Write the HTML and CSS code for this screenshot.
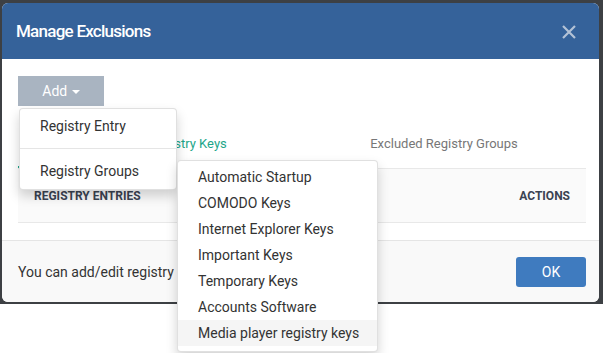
FILE: index.html
```html
<!DOCTYPE html>
<html lang="en">
<head>
    <meta charset="UTF-8">
    <meta name="viewport" content="width=device-width, initial-scale=1.0">
    <link rel="stylesheet" href="styles.css">
</head>
<body>
    <div class="backdrop">
        <div class="modal">
            <div class="modal-header">
                <h1>Manage Exclusions</h1>
                <svg class="close" width="16" height="16" viewBox="0 0 16 16">
                    <path d="M2 2 L14 14 M14 2 L2 14" stroke="#b3c2d6" stroke-width="2.2" fill="none"/>
                </svg>
            </div>
            <div class="modal-body">
                <button class="btn-add">Add <span class="caret"></span></button>
                <div class="tabs">
                    <div class="tab active">Excluded Registry Keys</div>
                    <div class="tab">Excluded Registry Groups</div>
                </div>
                <div class="table-head">
                    <span>Registry Entries</span>
                    <span>Actions</span>
                </div>

                <!-- add menu -->
                <ul class="dropdown add-menu">
                    <li>Registry Entry</li>
                    <li class="divider"></li>
                    <li>Registry Groups</li>
                </ul>

                <!-- registry groups submenu -->
                <ul class="dropdown groups-menu">
                    <li>Automatic Startup</li>
                    <li>COMODO Keys</li>
                    <li>Internet Explorer Keys</li>
                    <li>Important Keys</li>
                    <li>Temporary Keys</li>
                    <li>Accounts Software</li>
                    <li class="hover">Media player registry keys</li>
                </ul>
            </div>
            <div class="modal-footer">
                <p>You can add/edit registry</p>
                <button class="btn-ok">OK</button>
            </div>
        </div>
    </div>
</body>
</html>
```

FILE: styles.css
```css
html, body {
    height: 100%;
}
body {
    margin: 0;
    background: #fff;
    font-family: Roboto, "Liberation Sans", sans-serif;
    color: #333;
}
.backdrop {
    background-color: #3d4044;
    height: 304px;
    padding: 3px 4px 0 2px;
    box-sizing: border-box;
}
.modal {
    background: #fff;
    border-radius: 6px;
    height: 299px;
    display: flex;
    flex-direction: column;
}
.modal-header {
    background-color: #35629a;
    height: 56px;
    border-radius: 6px 6px 0 0;
    padding: 0 22px 0 14px;
    display: flex;
    align-items: center;
    justify-content: space-between;
}
h1 {
    margin: 0;
    color: #fff;
    font-size: 17px;
    font-weight: 500;
    letter-spacing: -0.75px;
}
.close {
    display: block;
    margin-top: 1px;
}
.modal-body {
    position: relative;
    height: 181px;
    box-sizing: border-box;
    padding: 17px 13px 17px 16px;
}
.btn-add {
    width: 86px;
    height: 30px;
    border: none;
    background-color: #a9b4c1;
    color: #fff;
    font-family: inherit;
    font-size: 14px;
    padding: 0;
    display: block;
}
.caret {
    display: inline-block;
    width: 0;
    height: 0;
    border-top: 4px solid #fff;
    border-left: 4px solid transparent;
    border-right: 4px solid transparent;
    vertical-align: middle;
    margin-left: 1px;
}
.tabs {
    display: flex;
    margin-top: 18px;
}
.tab {
    flex: 1;
    text-align: center;
    font-size: 13px;
    line-height: 20px;
    padding: 10px 0 12px;
    color: #777;
    border-bottom: 2px solid transparent;
}
.tab.active {
    color: #1ea68a;
    border-bottom-color: #1ea68a;
}
.table-head {
    height: 53px;
    border-top: 1px solid #e8e8e8;
    border-bottom: 1px solid #e8e8e8;
    background: #fafafa;
    display: flex;
    align-items: center;
    justify-content: space-between;
    padding: 0 16px;
    font-size: 12px;
    font-weight: 700;
    text-transform: uppercase;
    color: #3a4352;
}
.dropdown {
    position: absolute;
    margin: 0;
    list-style: none;
    background: #fff;
    border: 1px solid rgba(0, 0, 0, 0.12);
    border-radius: 4px;
    box-shadow: 0 6px 12px rgba(0, 0, 0, 0.175);
    box-sizing: border-box;
    font-size: 14px;
    z-index: 10;
}
.dropdown li {
    padding: 3px 20px;
    line-height: 20px;
    white-space: nowrap;
    color: #333;
}
.dropdown .divider {
    height: 1px;
    padding: 0;
    margin: 9px 0;
    background: #e5e5e5;
}
.add-menu {
    left: 17px;
    top: 49px;
    width: 158px;
    height: 82px;
    padding: 4px 0 6px;
}
.groups-menu {
    left: 175px;
    top: 101px;
    width: 201px;
    height: 192px;
    padding: 3px 0 7px;
}
.dropdown li.hover {
    background: #f5f5f5;
}
.modal-footer {
    flex: 1;
    border-top: 1px solid #e5e5e5;
    background: #f9f9f9;
    border-radius: 0 0 6px 6px;
    display: flex;
    align-items: center;
    justify-content: space-between;
    padding: 0 13px 0 16px;
}
.modal-footer p {
    margin: 0;
    font-size: 14px;
    color: #333;
}
.btn-ok {
    width: 70px;
    height: 30px;
    border: none;
    border-radius: 3px;
    background-color: #3f7bbf;
    color: #fff;
    font-family: inherit;
    font-size: 14px;
}
```
